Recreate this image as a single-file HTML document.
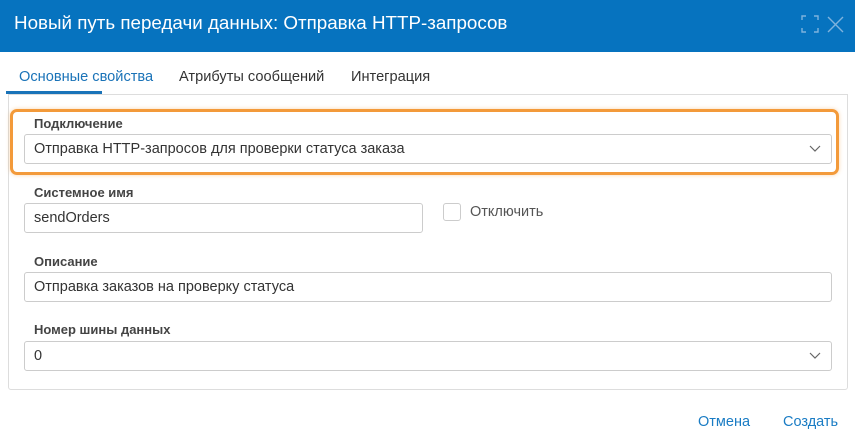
<!DOCTYPE html>
<html><head><meta charset="utf-8"><style>
*{box-sizing:border-box;margin:0;padding:0}
body{width:855px;height:442px;background:#fff;font-family:"Liberation Sans",sans-serif;position:relative;overflow:hidden;color:#333}
.hdr{position:absolute;left:0;top:0;width:855px;height:52px;background:#0673bf}
.title{position:absolute;left:14px;top:12px;color:#fff;font-size:18.8px;white-space:nowrap}
.tab{position:absolute;top:69px;font-size:14.6px;color:#333;white-space:nowrap}
.ab{position:absolute}
.lbl{position:absolute;left:34px;font-size:13px;font-weight:bold;color:#444}
.inp{position:absolute;border:1px solid #ccc;border-radius:3px;background:#fff;font-size:14.5px;color:#333;padding-left:9px;line-height:29px;white-space:nowrap}
.chev{position:absolute;right:10px;top:10px}
.btn{position:absolute;top:414px;font-size:14.5px;color:#1a7cc4}
</style></head><body>
<div class="hdr"><div class="title">Новый путь передачи данных: Отправка HTTP-запросов</div>
<svg class="ab" style="left:801px;top:15px" width="18" height="18" viewBox="0 0 18 18" fill="none" stroke="#7fb3dd" stroke-width="1.4"><path d="M1 5V1h4M13 1h4v4M17 13v4h-4M5 17H1v-4"/></svg>
<svg class="ab" style="left:827px;top:16px" width="17" height="17" viewBox="0 0 17 17" fill="none" stroke="#7fb3dd" stroke-width="1.4"><path d="M1 1l15 15M16 1L1 16"/></svg>
</div>
<div class="tab" style="left:19px;color:#1a73b8">Основные свойства</div>
<div class="tab" style="left:179px">Атрибуты сообщений</div>
<div class="tab" style="left:351px">Интеграция</div>
<div class="ab" style="left:6px;top:91px;width:96px;height:3px;background:#1a73b8"></div>
<div class="ab" style="left:8px;top:94px;width:840px;height:296px;border:1px solid #ddd;border-radius:0 0 3px 3px"></div>
<div class="ab" style="left:10px;top:109px;width:829px;height:66px;border:3px solid #f39a3a;border-radius:7px;box-shadow:0 0 4px rgba(243,154,58,.4)"></div>
<div class="lbl" style="top:116px">Подключение</div>
<div class="inp" style="left:24px;top:134px;width:808px;height:30px">Отправка HTTP-запросов для проверки статуса заказа<svg class="chev" width="12" height="8" viewBox="0 0 12 8" fill="none" stroke="#666" stroke-width="1.2"><path d="M1 1l5 5 5-5"/></svg></div>
<div class="lbl" style="top:185px">Системное имя</div>
<div class="inp" style="left:24px;top:203px;width:399px;height:30px">sendOrders</div>
<div class="ab" style="left:443px;top:203px;width:18px;height:18px;border:1px solid #ccc;border-radius:3px"></div>
<div class="ab" style="left:470px;top:204px;font-size:14.5px;color:#555">Отключить</div>
<div class="lbl" style="top:254px">Описание</div>
<div class="inp" style="left:24px;top:272px;width:808px;height:30px">Отправка заказов на проверку статуса</div>
<div class="lbl" style="top:322px">Номер шины данных</div>
<div class="inp" style="left:24px;top:341px;width:808px;height:30px">0<svg class="chev" width="12" height="8" viewBox="0 0 12 8" fill="none" stroke="#666" stroke-width="1.2"><path d="M1 1l5 5 5-5"/></svg></div>
<div class="btn" style="left:698px">Отмена</div>
<div class="btn" style="left:783px">Создать</div>
</body></html>
